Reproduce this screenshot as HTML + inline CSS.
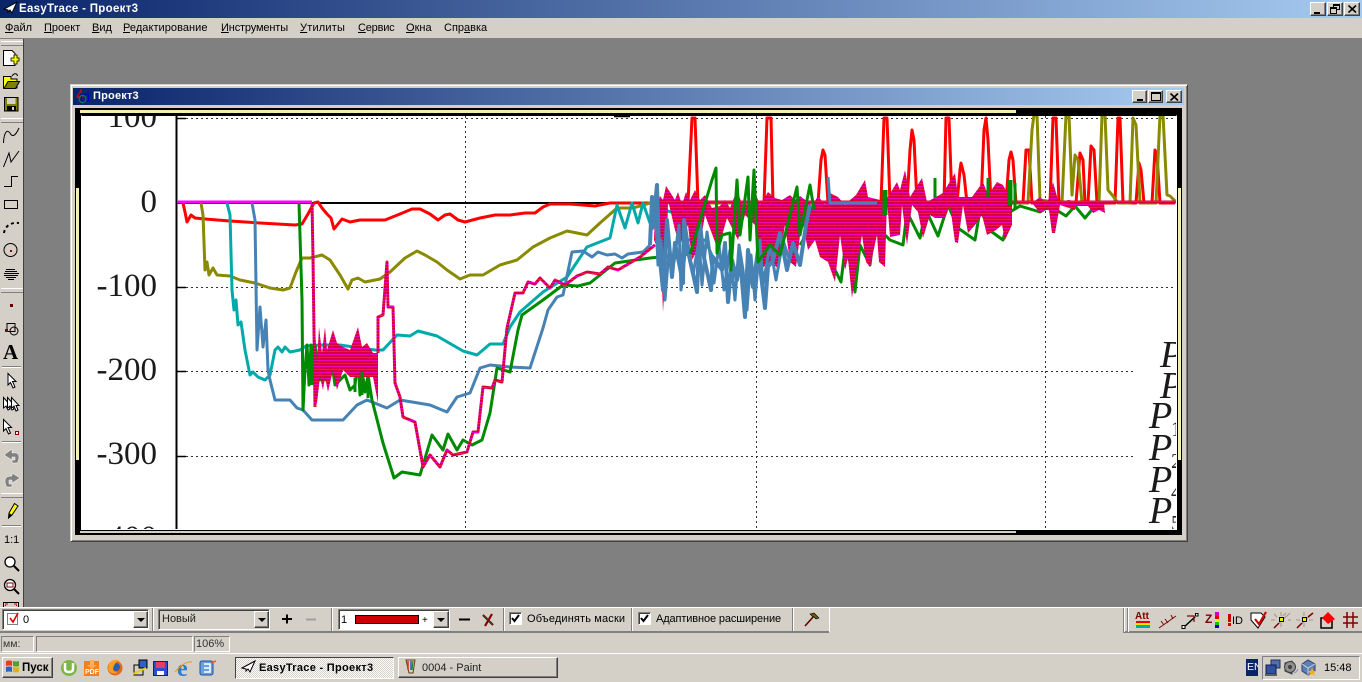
<!DOCTYPE html>
<html><head><meta charset="utf-8"><title>EasyTrace</title>
<style>
html,body{margin:0;padding:0;width:1362px;height:682px;overflow:hidden;background:#808080}
body{position:relative;font-family:"Liberation Sans",sans-serif;font-size:11px;color:#000}
.a{position:absolute;box-sizing:border-box}
.f{background:#d4d0c8}
.t{position:absolute;white-space:nowrap;line-height:13px}
.u{text-decoration:underline}
.btn{position:absolute;box-sizing:border-box;background:#d4d0c8;border:1px solid;border-color:#fff #404040 #404040 #fff;box-shadow:inset -1px -1px 0 #808080}
.sunk{position:absolute;box-sizing:border-box;border:1px solid;border-color:#808080 #fff #fff #808080}
.combo{position:absolute;box-sizing:border-box;border:1px solid;border-color:#808080 #fff #fff #808080;box-shadow:inset 1px 1px 0 #404040}
.arr{position:absolute;width:0;height:0;border-left:4px solid transparent;border-right:4px solid transparent;border-top:4px solid #000}
.sep{position:absolute;width:2px;border-left:1px solid #808080;border-right:1px solid #fff;box-sizing:border-box}
.hg{position:absolute;left:1px;width:22px;height:3px;border-top:1px solid #fff;border-bottom:1px solid #808080;box-sizing:content-box;background:#d4d0c8}
.hl{position:absolute;left:2px;width:19px;height:2px;border-top:1px solid #808080;border-bottom:1px solid #fff;box-sizing:border-box}
.cb{position:absolute;box-sizing:border-box;width:13px;height:13px;background:#fff;border:1px solid;border-color:#808080 #fff #fff #808080;box-shadow:inset 1px 1px 0 #404040}
svg{position:absolute;overflow:visible}
</style></head><body>

<!-- main title -->
<div class="a" style="left:0;top:0;width:1362px;height:18px;background:linear-gradient(90deg,#0a246a,#a6caf0)"></div>
<svg style="left:3px;top:2px" width="14" height="12"><path d="M1 7L14 0L9 11L7 8L5 10L5 8Z" fill="#fff" stroke="#000" stroke-width="1"/></svg>
<div class="t" style="left:19px;top:3px;color:#fff;font-weight:bold;font-size:11.5px;letter-spacing:.3px">EasyTrace - Проект3</div>
<div class="btn" style="left:1310px;top:2px;width:16px;height:14px"><div class="a" style="left:3px;top:9px;width:6px;height:2px;background:#000"></div></div>
<div class="btn" style="left:1327px;top:2px;width:16px;height:14px"><div class="a" style="left:5px;top:1px;width:7px;height:6px;border:1px solid #000;border-top-width:2px"></div><div class="a" style="left:2px;top:4px;width:7px;height:7px;border:1px solid #000;border-top-width:2px;background:#d4d0c8"></div></div>
<div class="btn" style="left:1344px;top:2px;width:16px;height:14px"><svg style="left:3px;top:2px" width="9" height="8"><path d="M0.5 0.5L8 7.5M8 0.5L0.5 7.5" stroke="#000" stroke-width="1.6"/></svg></div>

<!-- menu -->
<div class="a f" style="left:0;top:18px;width:1362px;height:20px"></div>
<div class="a" style="left:0;top:38px;width:1362px;height:1px;background:#808080"></div>
<div class="t" style="left:5px;top:22px"><span class="u">Ф</span>айл</div>
<div class="t" style="left:44px;top:22px"><span class="u">П</span>роект</div>
<div class="t" style="left:92px;top:22px"><span class="u">В</span>ид</div>
<div class="t" style="left:123px;top:22px;letter-spacing:.05px"><span class="u">Р</span>едактирование</div>
<div class="t" style="left:221px;top:22px;letter-spacing:-.15px"><span class="u">И</span>нструменты</div>
<div class="t" style="left:300px;top:22px;letter-spacing:.2px"><span class="u">У</span>тилиты</div>
<div class="t" style="left:358px;top:22px;letter-spacing:-.2px"><span class="u">С</span>ервис</div>
<div class="t" style="left:406px;top:22px"><span class="u">О</span>кна</div>
<div class="t" style="left:444px;top:22px">Спр<span class="u">а</span>вка</div>

<!-- left toolbar -->
<div class="a f" style="left:0;top:39px;width:24px;height:568px;border-right:1px solid #404040"></div>
<div class="hg" style="top:41px"></div><div class="hg" style="top:118px"></div><div class="hg" style="top:288px"></div><div class="hg" style="top:493px"></div>
<div class="hl" style="top:366px"></div><div class="hl" style="top:441px"></div><div class="hl" style="top:525px"></div>
<svg style="left:0;top:0" width="24" height="607">
 <path d="M3.5 50.5H12L15 53.500V65.500H3.500Z" fill="#fff" stroke="#000"/>
 <path d="M14 55h3v3h2v3h-2v3h-3v-3h-3v-3h3z" fill="#ff0" stroke="#000" stroke-width=".8"/>
 <path d="M3.500 76.500H11V79H17V88H3.500Z" fill="#ff0" stroke="#000"/><path d="M4 88.500L8 81.500H19.500L15.500 88.500Z" fill="#808000" stroke="#000"/><path d="M12 76C14 73 17 73 17.500 76" fill="none" stroke="#000"/>
 <rect x="4.500" y="97.500" width="13.500" height="13.500" fill="#808000" stroke="#000"/><rect x="7" y="98" width="8.500" height="6" fill="#d4d0c8"/><rect x="7" y="106" width="9" height="5" fill="#000"/><rect x="12" y="107" width="2" height="3" fill="#d4d0c8"/>
 <g fill="none" stroke="#000" stroke-width="1">
  <path d="M3.500 143C4 132 7 129 10 133C12 137 15 137 19 128"/>
  <path d="M3.500 167L9 153L11 162L19 151"/>
  <path d="M4 186.500H11.500V176.500H18"/>
  <rect x="4.500" y="200.500" width="13" height="8"/>
  <circle cx="10.500" cy="250" r="6.500"/>
  <path d="M4 273.500H19M5 271.500H17M6 269.500H15M4 275.500H18M6 277.500H16M8 279.500H14"/>
 </g>
 <path d="M4 233C5 226 11 222 19 223" fill="none" stroke="#000" stroke-width="2" stroke-dasharray="3 3"/>
 <rect x="10" y="250" width="2" height="2" fill="#800000"/>
 <rect x="10" y="304" width="3" height="3" fill="#600000"/>
 <path d="M7 331.500V323.500H15V331.500Z" fill="none" stroke="#000"/><circle cx="14" cy="331" r="4" fill="none" stroke="#000"/><rect x="5" y="329" width="3" height="3" fill="#800000"/>
 <path d="M8 373.500V385L10.500 382.500L13 388L15 387L12.500 381.500H16Z" fill="#fff" stroke="#000"/>
 <path d="M3.500 397.500V408L6 406L8 410L10 409L8 405.500H10.500Z" fill="#fff" stroke="#000"/><path d="M7.500 397.500V408L10 406L12 410L14 409L12 405.500H14.500Z" fill="#fff" stroke="#000"/><path d="M11.500 397.500V408L14 406L16 411L18 410L16 405.500H19Z" fill="#fff" stroke="#000"/>
 <path d="M3.500 419.500V431L6 428.500L8.500 434L10.500 433L8 427.500H11.500Z" fill="#fff" stroke="#000"/><rect x="15.500" y="431.500" width="3" height="3" fill="#fff" stroke="#800000"/>
 <path d="M12 449L4 455L12 460V457H15V460H12V463H17Q19 461 19 456Q18 452 12 453Z" fill="#808080" stroke="#fff" stroke-width=".5"/>
 <path d="M12 473L20 478L12 483V480H9V484H12V487H7Q5 485 5 480Q6 476 12 476Z" fill="#808080" stroke="#fff" stroke-width=".5"/>
 <path d="M14.500 503.500L18 506L12 515L8.500 518L9 513Z" fill="#ff0" stroke="#000"/><path d="M9 513L12 515L8.500 518Z" fill="#000"/>
 <text x="4" y="543" font-size="11" font-family="Liberation Sans,sans-serif">1:1</text>
 <circle cx="10" cy="562" r="5" fill="#fff" stroke="#000" stroke-width="1.300"/><path d="M14 566L19 571" stroke="#000" stroke-width="2"/>
 <circle cx="10" cy="585" r="5.500" fill="#fff" stroke="#000" stroke-width="1.300"/><rect x="7" y="583" width="6" height="4" fill="none" stroke="#800000"/><path d="M14 589L19 594" stroke="#000" stroke-width="2"/>
 <rect x="3.500" y="602.500" width="15" height="8" fill="#d4d0c8" stroke="#000"/><path d="M5 604h3M14 604h3M6 606l-1-1M16 606l1-1" stroke="#c00"/>
</svg>
<div class="t" style="left:3px;top:341px;font-family:'Liberation Serif',serif;font-weight:bold;font-size:21px;line-height:22px">A</div>

<!-- child window -->
<div class="a f" style="left:70px;top:84px;width:1118px;height:458px;border:1px solid;border-color:#d4d0c8 #404040 #404040 #d4d0c8;box-shadow:inset 1px 1px 0 #fff,inset -1px -1px 0 #808080"></div>
<div class="a" style="left:73px;top:88px;width:1111px;height:17px;background:linear-gradient(90deg,#0a246a,#a6caf0)"></div>
<svg style="left:76px;top:89px" width="14" height="15"><path d="M5 1L1 8H6Z" fill="none" stroke="#e00"/><rect x="5.500" y="5" width="7" height="7" fill="none" stroke="#00c"/><circle cx="6.500" cy="10" r="3.500" fill="none" stroke="#086"/></svg>
<div class="t" style="left:93px;top:90px;color:#fff;font-weight:bold;font-size:11px;letter-spacing:.2px">Проект3</div>
<div class="btn" style="left:1132px;top:90px;width:15px;height:13px"><div class="a" style="left:4px;top:8px;width:6px;height:2px;background:#000"></div></div>
<div class="btn" style="left:1148px;top:90px;width:15px;height:13px"><div class="a" style="left:2px;top:1px;width:10px;height:9px;border:1px solid #000;border-top-width:2px"></div></div>
<div class="btn" style="left:1166px;top:90px;width:16px;height:13px"><svg style="left:3px;top:2px" width="9" height="8"><path d="M0.500 0.500L8 7.500M8 0.500L0.500 7.500" stroke="#000" stroke-width="1.600"/></svg></div>

<div class="a" style="left:75px;top:108px;width:1107px;height:427px;background:#000"></div>
<div class="a" style="left:80px;top:110px;width:936px;height:3px;background:#f4f0b0"></div>
<div class="a" style="left:76px;top:188px;width:3px;height:272px;background:#f4f0b0"></div>
<div class="a" style="left:1178px;top:188px;width:3px;height:272px;background:#f4f0b0"></div>
<div class="a" style="left:80px;top:531px;width:936px;height:2px;background:#d4d0c8"></div>
<div class="a" style="left:81px;top:115px;width:1096px;height:415px;background:#000;border:1px solid #fff;border-top-color:#000"></div>
<div class="a" style="left:82px;top:116px;width:1094px;height:413px;background:#fff"></div>

<svg style="left:0;top:0" width="1362" height="682">
<defs>
<clipPath id="c"><rect x="82" y="116" width="1094" height="413"/></clipPath>
<pattern id="s" width="4" height="3" patternUnits="userSpaceOnUse"><rect width="4" height="3" fill="#d80038"/><rect width="4" height="1" fill="#f000c0"/></pattern>
</defs>
<g clip-path="url(#c)">
<g font-family="Liberation Serif,serif" font-size="33" text-anchor="end" fill="#1a1a1a">
<text x="157" y="127">100</text><text x="157" y="212">0</text><text x="157" y="296">-100</text><text x="157" y="380">-200</text><text x="157" y="464">-300</text><text x="157" y="548">-400</text>
</g>
<g stroke="#333" stroke-width="1" stroke-dasharray="2 3" fill="none">
<path d="M176 118.500H1176M176 287.500H1176M176 371.500H1136M176 456.500H1136M465.500 116V529M756.500 116V529M1045.500 116V529"/>
</g>
<path d="M176.500 116V529" stroke="#000" stroke-width="2"/>
<path d="M176 118.500H186M176 287.500H186M176 371.500H186M176 456.500H186M614 116.500H630" stroke="#000" stroke-width="1.500"/>
<path d="M176 203H660" stroke="#000" stroke-width="2"/>

<g fill="none" stroke-width="3" stroke-linejoin="round">
<polyline stroke="#ff0000" points="183,203 185,212 187,222 191,215 195,218 205,219 230,221 260,223 295,225 302,224 308,214 314,203 318,202 322,208 327,214 331,218 334,229 338,224 342,219 350,222 360,220 385,220 400,214 412,209 420,209 430,214 438,220 445,215 450,214 458,220 465,222 480,218 495,215 510,215 525,213 535,213 543,207 550,204 570,204 595,206 610,203 688,203 690,160 692,118 695,118 698,203 764,203 767,118 771,118 773,203 818,203 821,160 823,150 825,155 828,203 881,203 884,118 887,118 890,203 907,203 910,150 912,130 914,140 917,203 944,203 946,118 949,118 952,203 957,203 960,170 961,163 964,175 967,203 981,203 984,130 986,118 988,140 991,203 1006,203 1009,160 1011,152 1013,160 1016,203 1023,203 1026,150 1029,150 1032,203 1050,203 1053,118 1056,118 1059,203 1076,203 1080,153 1083,160 1085,203 1088,203 1091,146 1094,150 1097,203 1115,203 1118,118 1120,118 1123,203 1136,203 1139,163 1141,170 1144,203 1152,203 1155,150 1157,155 1160,203 1175,203"/>
<polyline stroke="#8a8a00" points="201,203 203,215 205,270 207,262 209,275 213,268 217,275 230,276 240,280 255,283 270,288 283,290 290,288 296,272 302,258 310,258 322,255 330,260 340,275 348,289 352,280 358,278 365,282 380,279 390,272 405,258 417,251 425,255 437,262 447,270 460,279 470,275 483,275 500,265 517,260 533,247 550,238 567,231 587,235 600,223 617,208 633,208 650,203 680,203 1028,203 1032,130 1034,115 1037,115 1040,200 1062,203 1066,115 1069,115 1072,195 1075,155 1078,160 1082,203 1099,203 1102,115 1105,115 1108,190 1113,196 1118,203 1130,203 1133,118 1136,125 1140,203 1156,203 1160,115 1163,115 1167,195 1170,196 1175,201"/>
<polyline stroke="#00aaaa" points="227,203 230,215 232,290 234,310 236,300 238,325 241,322 245,350 250,375 253,372 258,377 265,380 270,375 275,350 278,347 282,352 285,347 290,352 300,350 306,346 320,345 340,345 360,348 375,350 383,350 397,335 410,336 418,331 437,336 463,351 477,355 490,344 503,344 510,327 520,312 543,292 567,277 587,247 610,238 617,205 625,228 632,203 638,223 643,203 650,223 660,200 665,210 680,215 685,240 705,240 715,262 722,270"/>
<polyline stroke="#4682b4" points="252,203 255,220 257,350 260,307 263,347 266,320 268,370 270,380 275,400 290,400 297,408 303,410 312,420 343,420 357,405 367,400 387,408 400,400 430,405 447,412 457,397 470,393 480,368 490,365 510,367 530,368 543,328 548,310 557,297 563,295 572,252 583,251 592,257 598,252 607,255 615,254 622,258 628,254 643,252 650,245"/>
<polyline stroke="#008a00" points="299,203 302,300 303,410 305,370 307,345 309,385 311,345 313,375 315,345 320,380 322,360 325,380 330,350 335,385 345,375 350,390 355,385 358,360 360,395 362,370 365,392 368,375 372,400 383,443 394,478 402,472 420,475 432,435 443,450 448,434 457,450 463,440 472,445 482,440 490,413 497,368 510,372 518,330 522,315 543,300 563,285 578,286 590,283 615,263 650,258 690,254"/>
<polyline stroke="#008a00" points="800,245 812,225 825,250 841,282 846,240 855,292 860,245 870,265 875,225 890,240 903,245 907,212 920,238 926,210 938,236 948,205 958,228 975,240 980,210 992,232 1003,240 1010,212 1020,206 1040,212 1050,206 1066,216 1075,206 1085,218 1095,206"/>
</g>

<!-- stripes -->
<g fill="url(#s)">
<polygon points="315,327 317,363 319,327 322,353 325,327 327,350 333,330 337,343 343,347 350,350 358,327 362,347 367,343 373,353 378,353 378,403 373,377 360,377 350,377 343,370 337,390 333,370 328,392 325,377 323,390 320,377 317,403 315,407"/>
<polygon points="655,215 660,196 663,200 666,186 670,192 675,200 678,192 682,205 686,192 690,200 695,190 700,200 705,195 712,208 720,206 725,200 730,208 737,190 742,204 750,205 755,192 760,205 768,192 775,198 782,200 790,195 795,200 800,196 808,202 812,206 818,196 825,205 830,193 838,197 845,205 850,200 856,195 865,180 868,197 880,200 888,197 897,182 900,190 905,170 910,197 922,178 927,202 943,193 955,173 958,197 972,197 983,182 988,195 997,182 1003,185 1012,202 1012,225 1005,240 1002,225 996,230 987,235 982,215 975,225 968,233 963,205 958,243 955,242 950,205 945,218 935,218 930,215 923,238 918,212 912,205 907,245 902,205 900,235 890,237 887,200 885,267 879,262 877,235 870,267 866,262 862,235 858,258 852,298 848,258 845,270 840,235 835,282 828,262 820,257 815,240 808,250 802,220 796,267 790,262 785,225 778,268 770,262 762,268 755,225 745,215 738,240 727,218 718,250 705,215 700,245 692,260 688,225 680,245 675,230 668,200 667,250 663,312 661,260 658,250 654,240"/>
<polygon points="1032,203 1040,197 1043,200 1047,205 1053,182 1058,200 1075,203 1075,210 1060,205 1055,233 1052,233 1049,210 1045,210 1040,213 1036,208"/>
<polygon points="1060,203 1068,200 1090,203 1104,203 1105,213 1099,210 1093,213 1088,206 1070,206"/>
</g>
<g fill="none" stroke-linejoin="round">
<polyline stroke="url(#s)" stroke-width="3" points="312,203 313,257 315,407"/>
<polyline stroke="url(#s)" stroke-width="3" points="378,353 378,317 383,315 387,262 388,307 393,307 395,383 400,397 403,417 415,422 423,467 430,455 440,467 447,450 453,455 467,452 473,432 478,432 483,387 492,388 495,380 502,382 507,328 515,293 523,293 528,282 535,284 540,278 550,288 555,280 565,285 577,276 587,272 600,274 608,267 618,270 640,257 655,245"/>
<path stroke="#ff00ff" stroke-width="3" d="M177 202H312"/>
<path stroke="url(#s)" stroke-width="3" d="M655 202H1176"/>
<polyline stroke="#4682b4" stroke-width="4" points="650,245 652,197 653,227 657,185 659,250 663,290 667,220 672,277 675,243 683,283 684,220 690,260 697,292 700,223 703,253 711,290 713,257 722,270 725,243 728,302 732,260 737,280 740,257 745,317 748,250 753,287 758,250 765,308 768,267 773,260 780,233 787,270 793,243 800,265 806,225 810,205"/>
<polyline stroke="#4682b4" stroke-width="3" points="652,230 655,200 658,265 661,240 665,300 669,250 674,262 679,225 681,290 686,245 693,275 699,240 702,285 707,232 714,283 719,245 724,290 730,250 735,300 739,245 743,270 747,310 751,255 755,300 760,240 763,285 770,245 776,280 783,240 790,262"/>
<path stroke="#4682b4" stroke-width="3" d="M828 177L830 203H877"/>
<polyline stroke="#008a00" stroke-width="3" points="690,254 712,180 716,168 717,253 722,235 730,233 731,270 737,180 740,235 748,177 750,240 754,170 758,262 770,245 780,255 797,187 800,235 810,185 814,210"/>
<path stroke="#008a00" stroke-width="5" d="M885 190V215M1010 180V205"/>
<path stroke="#008a00" stroke-width="3" d="M935 178V198M988 178V198M1015 183V208"/>
<path stroke="#008a00" stroke-width="3" d="M312 345V385M355 378V392M362 372V395M368 378V398"/>
</g>
<g font-family="Liberation Serif,serif" font-style="italic" font-size="38" fill="#1a1a1a">
<text x="1160" y="367">P</text><text x="1160" y="398">P</text>
<text x="1149" y="428">P</text><text x="1149" y="460">P</text><text x="1149" y="492">P</text><text x="1149" y="523">P</text>
</g>
<g font-family="Liberation Serif,serif" font-size="21" fill="#222">
<text x="1171" y="436">1</text><text x="1171" y="468">2</text><text x="1171" y="499">4</text><text x="1171" y="530">5</text>
</g>
</g>
</svg>

<!-- bottom toolbar -->
<div class="a f" style="left:0;top:607px;width:1362px;height:47px;border-top:1px solid #fff"></div>
<div class="a" style="left:0;top:631px;width:829px;height:2px;background:#808080"></div>
<div class="a" style="left:0;top:653px;width:1362px;height:1px;background:#fff"></div>
<div class="a" style="left:1123px;top:631px;width:239px;height:2px;background:#808080"></div>
<div class="a" style="left:829px;top:608px;width:1px;height:24px;background:#fff"></div>

<div class="combo" style="left:2px;top:609px;width:147px;height:21px;background:#fff"></div>
<div class="cb" style="left:7px;top:613px;width:11px;height:12px;box-shadow:none;border-color:#808080"></div>
<svg style="left:8px;top:612px" width="12" height="12"><path d="M2 6L5 10L10 1" fill="none" stroke="#e00000" stroke-width="1.600"/></svg>
<div class="t" style="left:23px;top:614px">0</div>
<div class="btn" style="left:133px;top:611px;width:15px;height:17px"><div class="arr" style="left:3px;top:6px"></div></div>
<div class="sep" style="left:152px;top:608px;height:23px"></div>
<div class="combo" style="left:158px;top:609px;width:112px;height:21px;background:#d4d0c8"></div>
<div class="t" style="left:162px;top:613px;color:#222">Новый</div>
<div class="btn" style="left:254px;top:611px;width:15px;height:17px"><div class="arr" style="left:3px;top:6px"></div></div>
<svg style="left:281px;top:613px" width="40" height="12"><path d="M1 6H11M6 1.500V10.500" stroke="#000" stroke-width="2"/><path d="M25 6.500H35" stroke="#a0a0a0" stroke-width="2"/></svg>
<div class="sep" style="left:331px;top:608px;height:23px"></div>
<div class="combo" style="left:338px;top:609px;width:112px;height:21px;background:#fff"></div>
<div class="t" style="left:341px;top:614px">1</div>
<div class="a" style="left:355px;top:615px;width:64px;height:9px;background:#cc0000;border:1px solid #000"></div>
<div class="t" style="left:422px;top:614px;font-size:10px">+</div>
<div class="btn" style="left:433px;top:611px;width:16px;height:17px"><div class="arr" style="left:3px;top:6px"></div></div>
<svg style="left:458px;top:613px" width="40" height="14"><path d="M1 6.500H12" stroke="#000" stroke-width="2"/><path d="M25 2L35 12M34 1L27 13" stroke="#800000" stroke-width="2.200"/><path d="M25 2L35 12" stroke="#404040" stroke-width=".8"/></svg>
<div class="sep" style="left:503px;top:608px;height:23px"></div>
<div class="cb" style="left:509px;top:612px"></div>
<svg style="left:510px;top:613px" width="11" height="11"><path d="M2 5L4.500 8L9 2" fill="none" stroke="#000" stroke-width="2"/></svg>
<div class="t" style="left:527px;top:613px;letter-spacing:.15px">Объединять маски</div>
<div class="sep" style="left:631px;top:608px;height:23px"></div>
<div class="cb" style="left:638px;top:612px"></div>
<svg style="left:639px;top:613px" width="11" height="11"><path d="M2 5L4.500 8L9 2" fill="none" stroke="#000" stroke-width="2"/></svg>
<div class="t" style="left:656px;top:613px;letter-spacing:-.12px">Адаптивное расширение</div>
<div class="sep" style="left:792px;top:608px;height:23px"></div>
<svg style="left:803px;top:612px" width="16" height="15"><path d="M2 14L11 4" stroke="#600000" stroke-width="1.600"/><path d="M7 2L11 1L16 6L13 7L11 5L9 4Z" fill="#606000" stroke="#000" stroke-width=".6"/></svg>

<div class="sep" style="left:1123px;top:608px;height:24px"></div>
<div class="sep" style="left:1127px;top:608px;height:24px"></div>
<svg style="left:1130px;top:608px" width="230" height="24">
 <text x="5" y="11" font-size="10" font-weight="bold" fill="#800000" font-family="Liberation Sans,sans-serif" textLength="14">Att</text>
 <rect x="6" y="13" width="14" height="2" fill="#e00"/><rect x="6" y="15" width="14" height="2" fill="#ee0"/><rect x="6" y="17" width="14" height="1" fill="#0c0"/><rect x="6" y="18" width="14" height="2" fill="#0aa"/>
 <path d="M29 20L46 8M31 13l3 4M35 11l3 4M41 7l2 4" stroke="#800000" fill="none"/>
 <path d="M54 19L65 9" stroke="#000" stroke-width="1.500"/><rect x="52" y="17.500" width="3" height="3" fill="#fff" stroke="#000"/><rect x="65.500" y="5.500" width="2.500" height="2.500" fill="#fff" stroke="#000"/><path d="M57 8H64V14" stroke="#800000" fill="none" stroke-width="1.200"/>
 <text x="75" y="15" font-size="12" font-weight="bold" fill="#800000" font-family="Liberation Sans,sans-serif">Z</text>
 <rect x="85" y="4" width="4" height="4" fill="#c0c"/><rect x="85" y="8" width="4" height="3" fill="#e00"/><rect x="85" y="11" width="4" height="3" fill="#ee0"/><rect x="85" y="14" width="4" height="3" fill="#0c0"/><rect x="85" y="17" width="4" height="3" fill="#00c"/>
 <rect x="98" y="6" width="3" height="8" fill="#d00000"/><rect x="98" y="15" width="3" height="3" fill="#d00000"/>
 <text x="102" y="16" font-size="11" fill="#000" font-family="Liberation Sans,sans-serif">ID</text>
 <path d="M121 5H131L135 9L128 20L121 12Z" fill="#fff" stroke="#000"/><path d="M125 11L129 16L136 4" fill="none" stroke="#d00000" stroke-width="2.200"/>
 <path d="M144 20L160 5M151 4V8M151 15V19M156 5L153 8M144 6L147 9M158 12H161M141 12H145" stroke="#b09080"/><path d="M144 20L149 15" stroke="#800000" stroke-width="1.500"/><rect x="149.500" y="9.500" width="4" height="4" fill="#ee0" stroke="#000"/>
 <path d="M167 20L183 5M174 4V8M174 15V19M166 12H170M179 12H183" stroke="#b09080"/><path d="M167 20L172 15M178 9L183 5" stroke="#800000" stroke-width="1.500"/><rect x="172.500" y="9.500" width="4" height="4" fill="#ee0" stroke="#000"/>
 <rect x="191" y="10" width="11" height="10" fill="none" stroke="#000" stroke-width="1.500"/><path d="M198 4L205 11L198 16L192 10Z" fill="#ff0000"/>
 <path d="M217 4V20M223 4V20M213 9H228M213 15H228" stroke="#800000" stroke-width="1.500" fill="none"/>
</svg>

<!-- status -->
<div class="sunk" style="left:1px;top:636px;width:33px;height:16px;color:#333"><span style="position:absolute;left:1px;top:1px;line-height:13px;font-size:10.500px">мм:</span></div>
<div class="sunk" style="left:36px;top:636px;width:157px;height:16px"></div>
<div class="sunk" style="left:194px;top:636px;width:36px;height:16px;color:#333"><span style="position:absolute;left:1px;top:1px;line-height:13px">106%</span></div>

<!-- taskbar -->
<div class="a f" style="left:0;top:654px;width:1362px;height:28px"></div>
<div class="btn" style="left:2px;top:657px;width:51px;height:21px"></div>
<svg style="left:5px;top:659px" width="15" height="15"><path d="M1 2Q4 1 7 2V7Q4 6 1 7Z" fill="#e04020"/><path d="M8 2Q11 3 14 2V7Q11 8 8 7Z" fill="#50a030"/><path d="M1 8Q4 7 7 8V13Q4 12 1 13Z" fill="#3060c0"/><path d="M8 8Q11 9 14 8V13Q11 14 8 13Z" fill="#e0b020"/></svg>
<div class="t" style="left:22px;top:662px;font-weight:bold;font-size:11.500px">Пуск</div>
<svg style="left:60px;top:657px" width="160" height="22">
 <circle cx="9" cy="11" r="8" fill="#7ab648"/><path d="M5 6V12Q5 15 9 15Q13 15 13 12V6" fill="none" stroke="#fff" stroke-width="2.500"/>
 <path d="M24 4H39V19H24Z" fill="#f08020"/><text x="25" y="17" font-size="7" font-weight="bold" fill="#fff" font-family="Liberation Sans,sans-serif">PDF</text><path d="M30 3h4v5h3l-5 4l-5-4h3z" fill="#f8b060"/>
 <circle cx="55" cy="11" r="7.500" fill="#e8651c"/><circle cx="56" cy="10" r="4" fill="#2860b0"/><path d="M49 7Q53 1 60 4Q56 4 55 7Q50 14 58 16Q50 18 48 12Z" fill="#f5a020"/>
 <rect x="74" y="8" width="9" height="10" fill="#d4d0c8" stroke="#000"/><rect x="79" y="3" width="8" height="8" fill="#3060c0" stroke="#000"/><path d="M73 17L86 11" stroke="#e8d000" stroke-width="2"/>
 <rect x="93.500" y="4.500" width="14" height="14" fill="#2a50d0" stroke="#102080"/><rect x="96" y="5" width="9" height="6" fill="#e04060"/><rect x="97" y="14" width="7" height="4" fill="#fff"/>
 <text x="117" y="19" font-size="24" font-weight="bold" fill="#2a80d0" font-family="Liberation Serif,serif">e</text><path d="M115 15Q124 4 132 5" fill="none" stroke="#e0a020"/>
 <rect x="140" y="4" width="13" height="14" rx="2" fill="#6aa0e0" stroke="#2050a0"/><path d="M144 7H150V15H144M144 11H149" fill="none" stroke="#fff" stroke-width="1.500"/><path d="M151 6L156 4" stroke="#e06020" stroke-width="1.500"/>
</svg>
<div class="a" style="left:235px;top:657px;width:159px;height:22px;border:1px solid;border-color:#404040 #fff #fff #404040;background:#ece9e2;background-image:repeating-conic-gradient(#fff 0 25%,#d4d0c8 0 50%);background-size:2px 2px"></div>
<svg style="left:241px;top:660px" width="15" height="14"><path d="M1 8L14 1L9 12L7 9L5 11L5 9Z" fill="#fff" stroke="#000"/></svg>
<div class="t" style="left:259px;top:662px;font-weight:bold;letter-spacing:.3px">EasyTrace - Проект3</div>
<div class="btn" style="left:398px;top:657px;width:160px;height:21px"></div>
<svg style="left:403px;top:659px" width="14" height="17"><path d="M3 1L6 14H10L12 1Z" fill="#e8d0a0" stroke="#604020"/><path d="M5 2V11" stroke="#d03020" stroke-width="1.500"/><path d="M8 2V11" stroke="#2060c0" stroke-width="1.500"/><path d="M10 2L9 11" stroke="#208040" stroke-width="1.200"/></svg>
<div class="t" style="left:422px;top:662px;color:#222">0004 - Paint</div>

<div class="a" style="left:1246px;top:659px;width:12px;height:17px;background:#0a246a;color:#fff;font-size:10.500px;line-height:17px;overflow:hidden;white-space:nowrap;padding-left:1px">EN</div>
<div class="sunk" style="left:1262px;top:656px;width:98px;height:24px"></div>
<svg style="left:1264px;top:658px" width="56" height="20">
 <rect x="7" y="2" width="9" height="8" fill="#5070b0" stroke="#203060"/><rect x="2" y="7" width="10" height="9" fill="#3050a0" stroke="#102050"/><path d="M1 17H13" stroke="#606060" stroke-width="2"/>
 <path d="M21 5L28 3V16L21 13Z" fill="#707070" stroke="#404040"/><circle cx="26" cy="9" r="5.500" fill="#909090" stroke="#404040"/><circle cx="26" cy="9" r="2" fill="#404040"/><path d="M30 15Q33 14 34 11" stroke="#8090d0" fill="none"/>
 <path d="M38 6L44 2L51 6V13L44 17L38 13Z" fill="#6080b0" stroke="#304070"/><path d="M38 6L44 10L51 6M44 10V17" stroke="#c0d0e0" fill="none"/><path d="M48 10l1.500 3h3l-2.500 2l1 3l-3-2l-3 2l1-3l-2.500-2h3z" fill="#f0b020"/>
</svg>
<div class="t" style="left:1324px;top:662px">15:48</div>

</body></html>
